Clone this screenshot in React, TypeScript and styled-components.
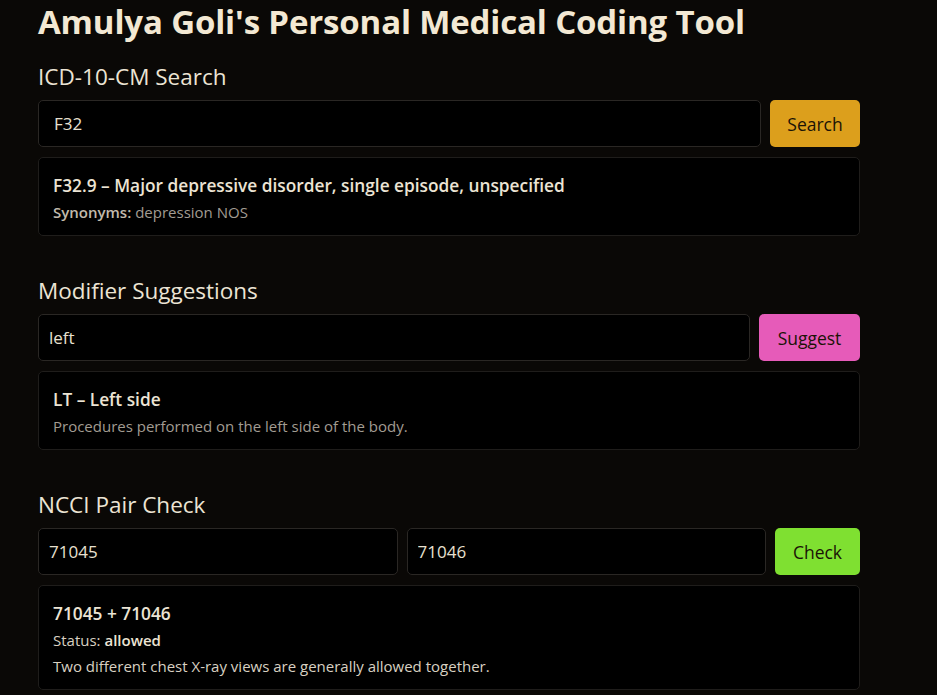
import React from "react";
import styled, { createGlobalStyle } from "styled-components";

const Global = createGlobalStyle`
  html, body { margin: 0; padding: 0; background: #0a0806; }
  body { font-family: "Open Sans", "Noto Sans", sans-serif; color: #ece4d4; }
  * { box-sizing: border-box; }
`;

const Page = styled.div`
  padding: 0 77px 0 38px;
  width: 937px;
`;

const Title = styled.h1`
  margin: 0;
  font-size: 33px;
  line-height: 44px;
  font-weight: 700;
  color: #f3e8d3;
  letter-spacing: -0.15px;
`;

const Section = styled.section<{ $first?: boolean }>`
  margin-top: ${(p) => (p.$first ? "18px" : "40px")};
`;

const Heading = styled.h2`
  margin: 0 0 8px;
  font-size: 22.5px;
  line-height: 30px;
  font-weight: 400;
  color: #ece4d4;
`;

const Row = styled.div`
  display: flex;
  gap: 9px;
  height: 47px;
`;

const Input = styled.input<{ $pad?: number }>`
  flex: 1;
  min-width: 0;
  height: 47px;
  background: #000;
  border: 1px solid #2a2724;
  border-radius: 5px;
  padding: 0 ${(p) => p.$pad ?? 10}px;
  font-family: inherit;
  font-size: 17px;
  color: #e8e0d0;
  outline: none;
`;

const Button = styled.button<{ $bg: string; $w: number }>`
  width: ${(p) => p.$w}px;
  flex: none;
  height: 47px;
  border: none;
  border-radius: 5px;
  background: ${(p) => p.$bg};
  color: #1b1306;
  font-family: inherit;
  font-size: 17.5px;
`;

const Card = styled.div`
  margin-top: 10px;
  background: #000;
  border: 1px solid #1f1d1b;
  border-radius: 5px;
  padding: 15px 14px 10px;
`;

const CardTitle = styled.div`
  font-size: 17.3px;
  line-height: 26px;
  font-weight: 600;
  color: #ece4d4;
`;

const Line = styled.div<{ $muted?: boolean }>`
  font-size: 15px;
  line-height: 26px;
  color: ${(p) => (p.$muted ? "#a29c92" : "#d8d0c2")};
  b { font-weight: 600; color: #ece4d4; }
`;

const Label = styled.span`
  font-weight: 600;
  color: #c2baac;
`;

export default function App() {
  return (
    <Page>
      <Global />
      <Title>Amulya Goli's Personal Medical Coding Tool</Title>

      <Section $first>
        <Heading>ICD-10-CM Search</Heading>
        <Row>
          <Input $pad={15} defaultValue="F32" />
          <Button $bg="#dc9f1c" $w={90}>Search</Button>
        </Row>
        <Card>
          <CardTitle>F32.9 – Major depressive disorder, single episode, unspecified</CardTitle>
          <Line $muted>
            <Label>Synonyms:</Label> depression NOS
          </Line>
        </Card>
      </Section>

      <Section>
        <Heading>Modifier Suggestions</Heading>
        <Row>
          <Input defaultValue="left" />
          <Button $bg="#e65bb9" $w={101}>Suggest</Button>
        </Row>
        <Card>
          <CardTitle>LT – Left side</CardTitle>
          <Line $muted>Procedures performed on the left side of the body.</Line>
        </Card>
      </Section>

      <Section>
        <Heading>NCCI Pair Check</Heading>
        <Row>
          <Input defaultValue="71045" />
          <Input defaultValue="71046" />
          <Button $bg="#7fe031" $w={85}>Check</Button>
        </Row>
        <Card>
          <CardTitle>71045 + 71046</CardTitle>
          <Line>
            Status: <b>allowed</b>
          </Line>
          <Line>Two different chest X-ray views are generally allowed together.</Line>
        </Card>
      </Section>
    </Page>
  );
}
